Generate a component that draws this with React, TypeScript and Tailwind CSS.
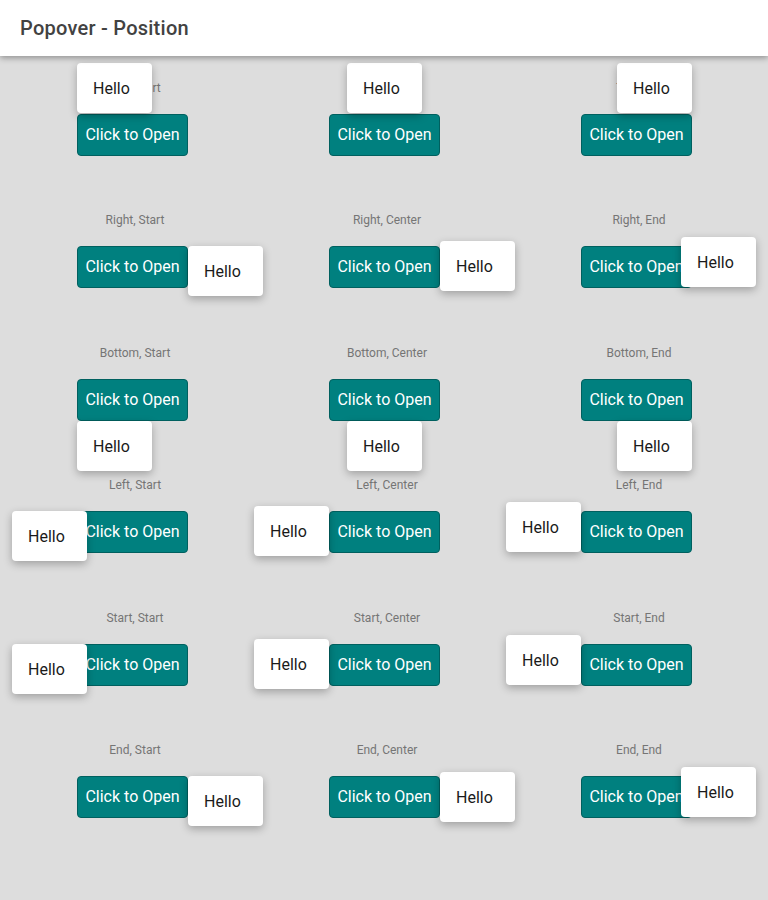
const cells: { label: string; pop: string }[] = [
  { label: "Top, Start", pop: "left-0 top-[-51px]" },
  { label: "Top, Center", pop: "left-[18px] top-[-51px]" },
  { label: "Top, End", pop: "left-[36px] top-[-51px]" },
  { label: "Right, Start", pop: "left-[111px] top-0" },
  { label: "Right, Center", pop: "left-[111px] top-[-5px]" },
  { label: "Right, End", pop: "left-[100px] top-[-9px]" },
  { label: "Bottom, Start", pop: "left-0 top-[42px]" },
  { label: "Bottom, Center", pop: "left-[18px] top-[42px]" },
  { label: "Bottom, End", pop: "left-[36px] top-[42px]" },
  { label: "Left, Start", pop: "left-[-65px] top-0" },
  { label: "Left, Center", pop: "left-[-75px] top-[-5px]" },
  { label: "Left, End", pop: "left-[-75px] top-[-9px]" },
  { label: "Start, Start", pop: "left-[-65px] top-0" },
  { label: "Start, Center", pop: "left-[-75px] top-[-5px]" },
  { label: "Start, End", pop: "left-[-75px] top-[-9px]" },
  { label: "End, Start", pop: "left-[111px] top-0" },
  { label: "End, Center", pop: "left-[111px] top-[-4px]" },
  { label: "End, End", pop: "left-[100px] top-[-9px]" },
]

export default function App() {
  return (
    <div className="min-h-[900px] bg-[#dddddd] font-['Roboto','Liberation_Sans',sans-serif]">
      <header className="relative z-20 h-14 bg-white flex items-center px-5 shadow-[0_2px_6px_rgba(0,0,0,0.35)]">
        <h1 className="text-[20px] font-medium tracking-[0.25px] text-[#424242]">Popover - Position</h1>
      </header>

      <main className="grid grid-cols-[repeat(3,252px)] gap-y-[55.4px] pl-[9px] pt-[23px]">
        {cells.map((cell) => (
          <div key={cell.label} className="flex flex-col items-center">
            <p className="text-xs leading-[19px] text-[#757575]">{cell.label}</p>
            <div className="relative mt-[16px] mr-[5px]">
              <button
                type="button"
                className="w-[111px] h-[42px] rounded-[4px] border border-[#00605f] bg-[#00807f] text-white text-base"
              >
                Click to Open
              </button>
              <div
                className={`absolute z-10 w-[75px] h-[50px] flex items-center pl-4 pt-[2px] rounded-[4px] bg-white text-base text-[#1a1a1a] shadow-[0_3px_8px_rgba(0,0,0,0.28)] ${cell.pop}`}
              >
                Hello
              </div>
            </div>
          </div>
        ))}
      </main>
    </div>
  )
}
